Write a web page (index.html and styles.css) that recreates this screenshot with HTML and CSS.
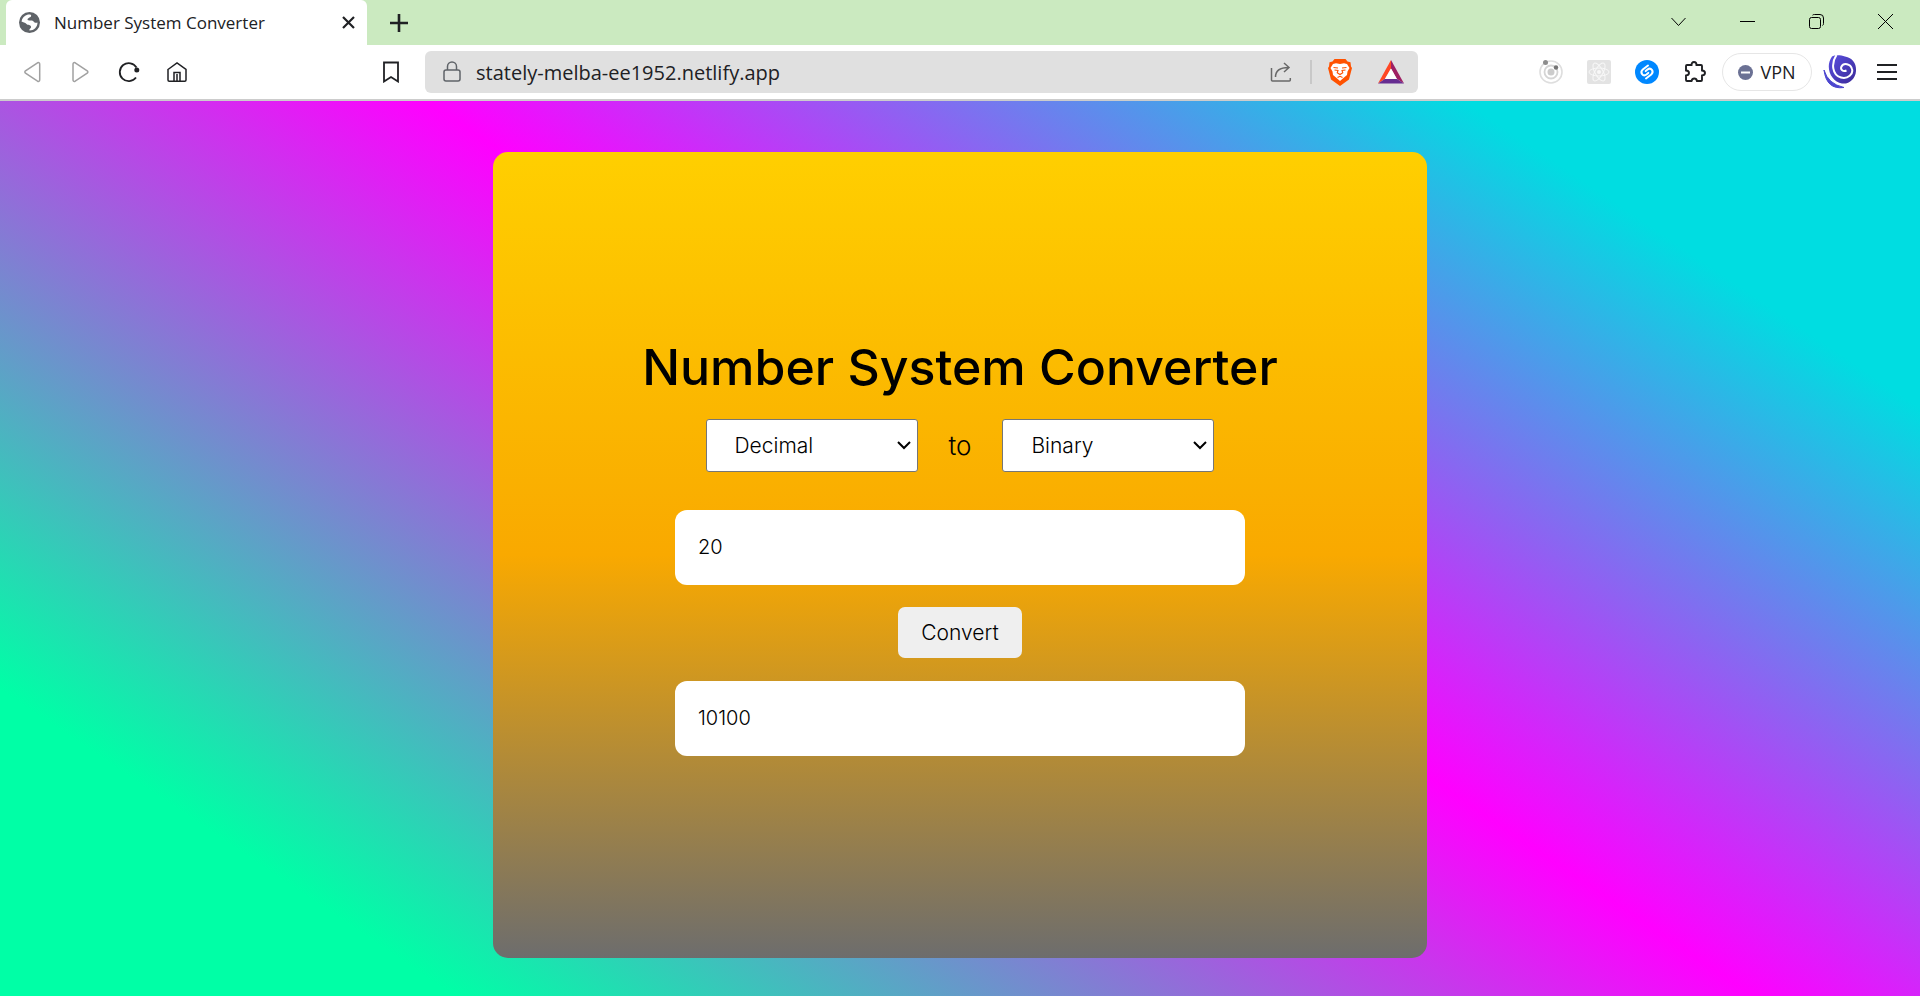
FILE: index.html
```html
<!DOCTYPE html>
<html lang="en">
<head>
<meta charset="utf-8">
<meta name="viewport" content="width=device-width, initial-scale=1">
<title>Number System Converter</title>
<link rel="stylesheet" href="styles.css">
</head>
<body>
<header class="browser">
  <div class="tabstrip">
    <div class="tab">
      <svg width="21" height="21" viewBox="0 0 21 21" aria-hidden="true"><circle cx="10.500" cy="10.500" r="10.500" fill="#5f6368"/><path d="M9 2.500C13 2 12.500 4 11.500 5 10 6 8.500 6 8.500 8c2 1 5-.5 6.500 2 1 1 2.500 1 3.500.5C18.500 15 15 18.500 10.500 18.500c-.5-2 2-2 1.500-4-.5-2-3-1-4.500-2.500C6 10.500 4 10.500 2.500 9.500 3 6 5.500 3.500 9 2.500z" fill="#fff"/></svg>
      <span class="tab-title">Number System Converter</span>
      <button class="tab-close" aria-label="Close tab"><svg width="13" height="13" viewBox="0 0 13 13"><path d="M1 1l11 11M12 1L1 12" stroke="#202124" stroke-width="2.200"/></svg></button>
    </div>
    <button class="new-tab" aria-label="New tab"><svg width="18" height="18" viewBox="0 0 18 18"><path d="M9 0v18M0 9h18" stroke="#202124" stroke-width="2.600"/></svg></button>
    <div class="window-controls">
      <button aria-label="Search tabs"><svg width="15" height="15" viewBox="0 0 15 15"><path d="M.5 4l7 7.500 7-7.500"/></svg></button>
      <button aria-label="Minimize"><svg width="15" height="15" viewBox="0 0 15 15"><path d="M0 7.500h15"/></svg></button>
      <button aria-label="Restore"><svg width="15" height="15" viewBox="0 0 15 15"><rect x=".5" y="3.500" width="11" height="11" rx="2"/><path d="M3.500 1.200Q4 .5 5.500.5H11Q14.500.5 14.500 4v5.500q0 1.500-1 2"/></svg></button>
      <button aria-label="Close window"><svg width="15" height="15" viewBox="0 0 15 15"><path d="M0 0l15 15M15 0L0 15"/></svg></button>
    </div>
  </div>
  <div class="toolbar">
    <nav class="nav" aria-label="History">
      <button aria-label="Back"><svg width="22" height="22" viewBox="0 0 22 22"><path d="M15.500 1.800L3.500 9.800q-1.300 1.200 0 2.400l12 8q2.200.8 2.200-1.500V3.300q0-2.300-2.200-1.500z" stroke="#a1a1a1"/></svg></button>
      <button aria-label="Forward"><svg width="22" height="22" viewBox="0 0 22 22"><path d="M5.200 1.800l12 8q1.300 1.200 0 2.400l-12 8Q3 21 3 18.700V3.300q0-2.300 2.200-1.500z" stroke="#a1a1a1"/></svg></button>
      <button aria-label="Reload"><svg width="22" height="22" viewBox="0 0 22 22"><path d="M18.500 6.500A9 9 0 1 0 18 16.500" stroke-width="1.800"/><circle cx="18.800" cy="9" r="2.500" fill="#202124" stroke="none"/></svg></button>
      <button aria-label="Home"><svg width="22" height="22" viewBox="0 0 22 22"><path d="M2 8.500L11 2l9 6.500V19q0 1.200-1.200 1.200H3.200Q2 20.200 2 19zM8 20v-8.500h6V20M11 13v7"/></svg></button>
    </nav>
    <button class="bookmark" aria-label="Bookmark"><svg width="22" height="22" viewBox="0 0 22 22"><path d="M4 1.500h14v19l-7-4.500-7 4.500z" stroke-width="1.800"/></svg></button>
    <div class="address">
      <svg width="20" height="22" viewBox="0 0 20 22" aria-hidden="true"><path d="M5.500 9V5.500a4.500 4.500 0 0 1 9 0V9" fill="none" stroke="#5f6368" stroke-width="1.500"/><rect x="2" y="9" width="16" height="11" rx="2" fill="none" stroke="#5f6368" stroke-width="1.500"/></svg>
      <input class="url" type="text" aria-label="Address" value="stately-melba-ee1952.netlify.app">
      <button aria-label="Share"><svg width="22" height="22" viewBox="0 0 22 22"><path d="M1.500 7v12q0 1 1 1h16.800q1 0 1-1v-2M5.500 16C5.500 9.500 10 6.500 18.500 6.500M14 2l5 4.500-5 4.500" stroke="#686868"/></svg></button>
      <span class="divider"></span>
      <button aria-label="Brave Shields"><svg width="26" height="28" viewBox="0 0 26 28"><path d="M7.500 1h11l2 2.500 3 .7.500 4.300 1 1.500-3 11.500L13 28l-9-6.500L1 10l1-1.500.5-4.300 3-.7z" fill="#ff5200" stroke="none"/><path d="M6 6l3-.8 4 .8 4-.8 3 .8 2.500 4-2 3.500-.5 3.500-3 2.500-4 3.500-4-3.500-3-2.500-.5-3.500-2-3.500z" fill="#fff" stroke="none"/><path d="M6.500 9.500l4.500.5M19.500 9.500l-4.500.5M7.500 12l3.500.5-.8 2.300L13 16.500l2.800-1.700-.8-2.300 3.500-.5M10.500 19.500l2.500-1.200 2.500 1.200" stroke="#ff5200" stroke-width="1.100"/></svg></button>
      <button aria-label="Brave Rewards"><svg width="28" height="24" viewBox="0 0 28 24"><path d="M14 0v8.500L7.800 19 1 23.500z" fill="#ff4724" stroke="none"/><path d="M14 0l13 23.500L20 19 14 8.500z" fill="#9e1f63" stroke="none"/><path d="M1 23.500L7.800 19H20l7 4.500z" fill="#662d91" stroke="none"/><path d="M14 8.500L19.800 19H8z" fill="#fff" stroke="none"/></svg></button>
    </div>
    <div class="extensions">
      <button aria-label="Tracker extension"><svg width="24" height="24" viewBox="0 0 24 24"><circle cx="12" cy="12" r="11" stroke="#dedede" stroke-width="1.600"/><circle cx="12" cy="12" r="6.500" stroke="#d5d5d5" stroke-width="1.800"/><circle cx="12" cy="12" r="3.500" fill="#ccc" stroke="none"/><circle cx="6.500" cy="2.500" r="2.500" fill="#8c8c8c" stroke="none"/><circle cx="17" cy="7.500" r="2.200" fill="#747474" stroke="none"/></svg></button>
      <button aria-label="React Developer Tools"><svg width="24" height="24" viewBox="0 0 24 24"><rect width="24" height="24" rx="2" fill="#e3e3e3" stroke="none"/><g stroke="#f8f8f8" stroke-width="1"><ellipse cx="12" cy="12" rx="10" ry="4"/><ellipse cx="12" cy="12" rx="10" ry="4" transform="rotate(60 12 12)"/><ellipse cx="12" cy="12" rx="10" ry="4" transform="rotate(120 12 12)"/></g><circle cx="12" cy="12" r="2" fill="#f8f8f8" stroke="none"/></svg></button>
      <button aria-label="Shazam"><svg width="24" height="24" viewBox="0 0 24 24"><circle cx="12" cy="12" r="12" fill="#08f" stroke="none"/><path d="M13 5.500L7.800 9.500C4.500 12.500 8 17 11.500 14.500l1.800-1.600M11 18.500l5.200-4C19.500 11.500 16 7 12.500 9.500l-1.800 1.600" stroke="#fff" stroke-width="2" stroke-linecap="round"/></svg></button>
      <button aria-label="Extensions"><svg width="22" height="22" viewBox="0 0 22 22"><path d="M3 4h4.500Q7.500 1 10 1t2.500 3H17q1 0 1 1v4.500q3 .3 3 2.500t-3 2.500V19q0 1-1 1h-4q-.5-2.500-2.700-2.500T7.500 20H3q-1 0-1-1v-4.500q3-.3 3-2.500T2 9.500V5q0-1 1-1z" stroke-width="1.900"/></svg></button>
    </div>
    <button class="vpn"><svg width="15" height="15" viewBox="0 0 15 15"><circle cx="7.500" cy="7.500" r="7.500" fill="#6b7194" stroke="none"/><path d="M3 7.500h9" stroke="#fff" stroke-width="2"/></svg>VPN</button>
    <button class="profile" aria-label="Profile"><svg width="34" height="34" viewBox="0 0 34 34"><defs><linearGradient id="swirl" x1="0" y1="0" x2="1" y2="1"><stop offset="0" stop-color="#5a4fe0"/><stop offset="1" stop-color="#3b2a98"/></linearGradient></defs><path d="M9 1.500C12-.5 18 0 22 1.500 30 3 33.500 9 33 16c-.5 8-7 13.500-14 12.500C8 27 1.500 12 9 1.500z" fill="url(#swirl)" stroke="none"/><path d="M13.500 0C8 8 9 20 18 22.500c7 1.800 12.500-3.500 11-8.500-1.500-5.500-8.500-6.500-10.500-2.500-1.500 3 1.500 5.500 5 4" stroke="#fff" stroke-width="2"/><path d="M1 15q4 14 20 17.500Q3.500 35 1 15z" fill="#4c46cf" stroke="#4c46cf" stroke-width="1"/></svg></button>
    <button class="menu" aria-label="Menu"><svg width="20" height="16" viewBox="0 0 20 16"><path d="M0 1h20M0 8h20M0 15h20" stroke-width="1.800"/></svg></button>
  </div>
</header>
<main class="page">
  <form class="card">
    <h1 class="title">Number System Converter</h1>
    <div class="systems">
      <select aria-label="From"><option>Decimal</option><option>Binary</option><option>Octal</option></select>
      <span>to</span>
      <select aria-label="To"><option>Binary</option><option>Decimal</option><option>Octal</option></select>
    </div>
    <input class="number" type="text" aria-label="Number" value="20">
    <button class="convert" type="button">Convert</button>
    <input class="number" type="text" aria-label="Result" value="10100" readonly>
  </form>
</main>
</body>
</html>
```
FILE: styles.css
```css
* { box-sizing: border-box; }
body {
  margin: 0;
  min-height: 100vh;
  display: flex;
  flex-direction: column;
  font-family: Inter, sans-serif;
}
button {
  border: 0;
  padding: 0;
  background: none;
  font: inherit;
  color: inherit;
}
svg { display: block; flex: none; }

/* Browser chrome */
.browser {
  font-family: "Open Sans", sans-serif;
  color: #202124;
  border-bottom: 2px solid #ccc;
  background: #fff;
}
.browser button {
  display: flex;
  align-items: center;
  justify-content: center;
}
.tabstrip {
  display: flex;
  height: 45px;
  padding-left: 6px;
  background: #cbeac0;
}
.tab {
  display: flex;
  align-items: center;
  width: 361px;
  padding: 0 12px 0 13px;
  border-radius: 6px 6px 0 0;
  background: #fff;
}
.tab-title {
  flex: 1;
  margin-left: 14px;
  font-size: 17px;
  font-weight: 500;
  white-space: nowrap;
}
.new-tab { width: 64px; }
.window-controls { display: flex; margin-left: auto; }
.window-controls button { width: 69px; padding-bottom: 2px; }
.window-controls svg { fill: none; stroke: #000; stroke-width: 1; }
.toolbar {
  display: flex;
  align-items: center;
  height: 54px;
  padding-left: 9px;
}
.toolbar button svg { fill: none; stroke: #202124; stroke-width: 1.5; }
.nav, .extensions { display: flex; }
.nav button, .bookmark, .extensions button { width: 48px; height: 42px; }
.bookmark { margin: 0 10px 0 166px; }
.address {
  flex: 1;
  display: flex;
  align-items: center;
  min-width: 0;
  height: 42px;
  padding: 0 13px 0 17px;
  border-radius: 6px;
  background: #e0e0e0;
}
.url {
  flex: 1;
  min-width: 0;
  margin-left: 14px;
  padding: 0;
  border: 0;
  background: none;
  font: 20px "Open Sans", sans-serif;
  color: #202124;
}
.divider { width: 2px; height: 24px; margin: 0 15px 0 18px; background: #c8c8c8; }
.address button + button { margin-left: 24px; }
.extensions { margin-left: 109px; }
.toolbar .vpn {
  width: 90px;
  height: 38px;
  gap: 7px;
  margin: 0 11px 0 3px;
  border: 1px solid #e6e6e6;
  border-radius: 19px;
  font-size: 18px;
}
.menu { margin: 0 23px 0 20px; }

/* Converter page */
.page {
  flex: 1;
  display: flex;
  justify-content: center;
  padding: 51px 24px 38px;
  background: linear-gradient(34deg, #00ffa6 14%, #ff00ff 54%, #00dde1 86%);
}
.card {
  display: flex;
  flex-direction: column;
  align-items: center;
  justify-content: center;
  width: 100%;
  max-width: 934px;
  padding: 24px 24px 36px;
  border-radius: 15px;
  background: linear-gradient(#ffcf00, #f9a900 50%, #6d6d6d);
}
.title {
  margin: 0 0 28px;
  font-size: 50px;
  font-weight: 500;
  line-height: 48px;
}
.systems {
  display: flex;
  align-items: center;
  gap: 31px;
  margin-bottom: 38px;
  font-size: 26px;
  font-weight: 300;
}
.systems select {
  width: 212px;
  height: 53px;
  padding: 0 28px;
  border: 1px solid #767676;
  border-radius: 3px;
  appearance: none;
  background: #fff url("data:image/svg+xml,%3Csvg xmlns='http://www.w3.org/2000/svg' width='14' height='9'%3E%3Cpath d='M1 1l6 6 6-6' fill='none' stroke='%23000' stroke-width='2'/%3E%3C/svg%3E") no-repeat right 6px center;
  font: 300 21px Inter, sans-serif;
  color: #000;
}
.number {
  width: 100%;
  max-width: 570px;
  height: 75px;
  padding: 0 23px;
  border: 0;
  border-radius: 12px;
  background: #fff;
  font: 300 20px Inter, sans-serif;
  color: #000;
}
.convert {
  height: 51px;
  margin: 22px 0 23px;
  padding: 0 23px;
  border-radius: 7px;
  background: #efefef;
  font-size: 21px;
  font-weight: 300;
  color: #000;
}
```
